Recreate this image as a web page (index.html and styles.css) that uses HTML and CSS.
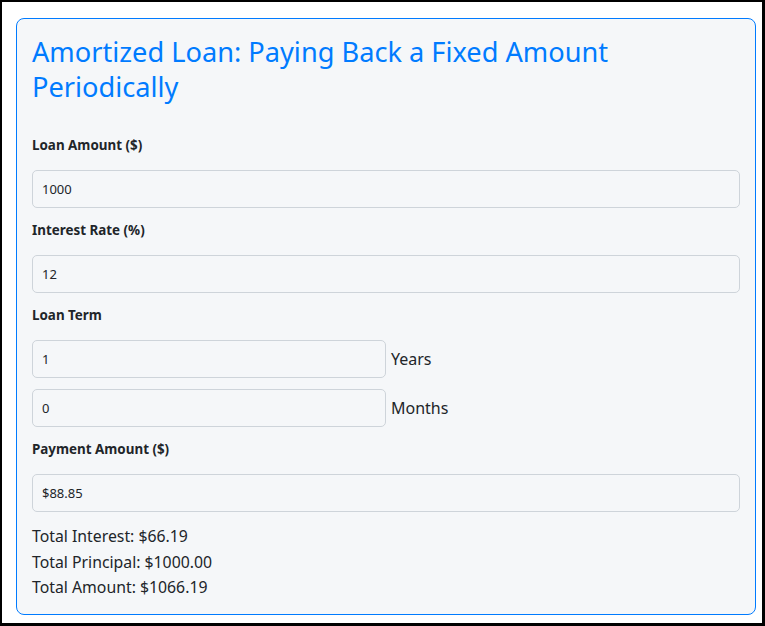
FILE: index.html
```html
<!DOCTYPE html>
<html>
<head>
<meta charset="utf-8">
<link rel="stylesheet" href="styles.css">
</head>
<body>
<div class="frame">
  <div class="card">
    <h1 class="title">Amortized Loan: Paying Back a Fixed Amount Periodically</h1>
    <label class="label">Loan Amount ($)</label>
    <div class="input">1000</div>
    <label class="label">Interest Rate (%)</label>
    <div class="input">12</div>
    <label class="label">Loan Term</label>
    <div class="row">
      <div class="input half">1</div>
      <span class="unit">Years</span>
    </div>
    <div class="row row-gap">
      <div class="input half">0</div>
      <span class="unit">Months</span>
    </div>
    <label class="label">Payment Amount ($)</label>
    <div class="input">$88.85</div>
    <div class="totals">
      <div>Total Interest: $66.19</div>
      <div>Total Principal: $1000.00</div>
      <div>Total Amount: $1066.19</div>
    </div>
  </div>
</div>
</body>
</html>
```
FILE: styles.css
```css
* { box-sizing: border-box; }
html, body { margin: 0; padding: 0; }
body {
  width: 765px;
  height: 626px;
  background: #000;
  font-family: "Noto Sans", "Open Sans", sans-serif;
  color: #212529;
}
.frame {
  margin: 2px 3px 3px 2px;
  height: 621px;
  background: #fff;
  padding: 16px 6px 8px 14px;
}
.card {
  height: 597px;
  border: 1px solid #007bff;
  border-radius: 8px;
  background: #f5f7f9;
  padding: 15px 15px 0 15px;
}
.title {
  margin: 0 0 31px 0;
  font-weight: 400;
  font-size: 27.2px;
  line-height: 35px;
  color: #007bff;
}
.label {
  display: block;
  font-weight: 700;
  font-size: 13.4px;
  line-height: 20px;
  margin: 12px 0 15px 0;
}
.title + .label { margin-top: 0; }
.input {
  height: 38px;
  border: 1px solid #ced4da;
  border-radius: 5px;
  background: #f5f7f9;
  font-size: 13px;
  line-height: 36px;
  padding: 0 9px;
}
.row {
  display: flex;
  align-items: center;
  gap: 5px;
}
.row-gap { margin-top: 11px; }
.half { width: 354px; flex: none; }
.unit { font-size: 16px; }
.totals {
  margin-top: 12px;
  font-size: 15.8px;
  line-height: 25.5px;
}
```
